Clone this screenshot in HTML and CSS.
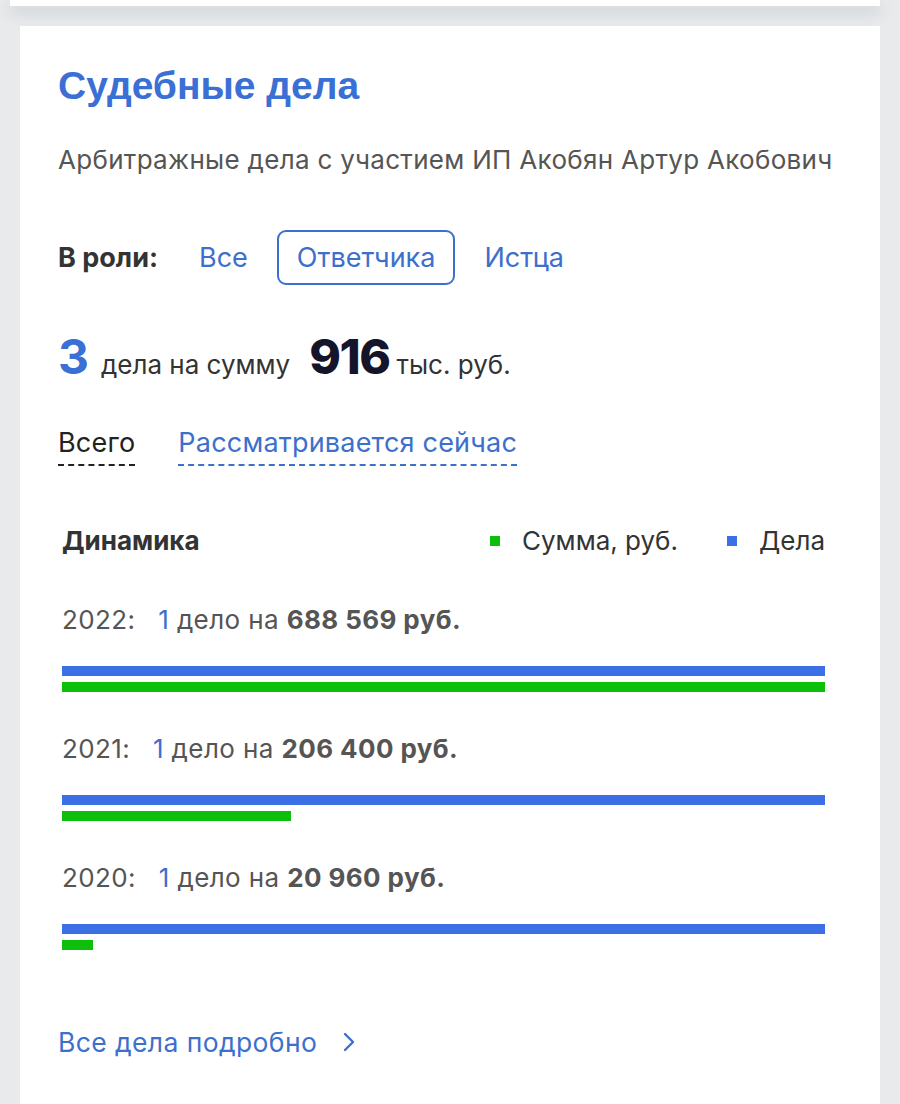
FILE: index.html
```html
<!DOCTYPE html>
<html lang="ru">

<head>
  <meta charset="UTF-8">
  <meta name="viewport" content="width=device-width, initial-scale=1.0">
  <title>Судебные дела</title>
  <link rel="stylesheet" href="styles.css">
</head>

<body>
  <div class="prev-card"></div>

  <section class="card">
    <h2 class="card-title">Судебные дела</h2>
    <p class="subtitle">Арбитражные дела с участием ИП Акобян Артур Акобович</p>

    <div class="roles">
      <span class="roles-label">В роли:</span>
      <a href="#" class="role first">Все</a>
      <a href="#" class="role active">Ответчика</a>
      <a href="#" class="role">Истца</a>
    </div>

    <div class="total">
      <span class="total-count">3</span>
      <span class="total-text">дела на сумму</span>
      <span class="total-sum">916</span>
      <span class="total-text">тыс. руб.</span>
    </div>

    <div class="tabs">
      <a href="#" class="tab current">Всего</a>
      <a href="#" class="tab">Рассматривается сейчас</a>
    </div>

    <div class="dynamics">
      <div class="dynamics-head">
        <span class="dynamics-title">Динамика</span>
        <span class="legend"><i class="dot green"></i>Сумма, руб.</span>
        <span class="legend"><i class="dot blue"></i>Дела</span>
      </div>

      <div class="year">
        <div class="year-text"><span class="year-label">2022:</span> <span class="num">1</span> дело на <b>688 569 руб.</b></div>
        <div class="bar blue" style="width:100%"></div>
        <div class="bar green" style="width:100%"></div>
      </div>

      <div class="year">
        <div class="year-text"><span class="year-label">2021:</span> <span class="num">1</span> дело на <b>206 400 руб.</b></div>
        <div class="bar blue" style="width:100%"></div>
        <div class="bar green" style="width:30%"></div>
      </div>

      <div class="year">
        <div class="year-text"><span class="year-label">2020:</span> <span class="num">1</span> дело на <b>20 960 руб.</b></div>
        <div class="bar blue" style="width:100%"></div>
        <div class="bar green" style="width:4%"></div>
      </div>
    </div>

    <a href="#" class="more">Все дела подробно
      <svg width="12" height="20" viewBox="0 0 12 20"><path d="M2 2l8 8-8 8" fill="none" stroke="#3d6fcc" stroke-width="2.4" stroke-linecap="round" stroke-linejoin="round"/></svg>
    </a>
  </section>
</body>

</html>
```

FILE: styles.css
```css
body {
  margin: 0;
  background-color: #e8eaec;
  font-family: 'Inter', 'Roboto', sans-serif;
  color: #555;
}

a {
  text-decoration: none;
}

.prev-card {
  height: 6px;
  margin: 0 20px 0 10px;
  background-color: #fff;
  box-shadow: 0 6px 14px rgba(150, 155, 165, 0.45);
}

.card {
  background-color: #fff;
  margin: 20px 20px 0 20px;
  padding: 38px 38px 60px 38px;
}

.card-title {
  margin: 0;
  font-family: 'Liberation Sans', sans-serif;
  font-size: 39px;
  font-weight: bold;
  color: #3a6fd6;
  line-height: 44px;
}

.subtitle {
  margin: 36px 0 0 0;
  font-size: 26px;
  line-height: 32px;
  letter-spacing: 0.3px;
  color: #555;
}

.roles {
  display: flex;
  align-items: center;
  margin-top: 54px;
  font-size: 27px;
  line-height: 31px;
}

.roles-label {
  font-weight: bold;
  color: #333;
  margin-right: 21px;
}

.role {
  color: #3d6fcc;
  padding: 10px 18px;
  border: 2px solid transparent;
  border-radius: 9px;
  margin-right: 9px;
}

.role.active {
  border-color: #3d6fcc;
}

.total {
  display: flex;
  align-items: baseline;
  margin-top: 44px;
  line-height: 56px;
}

.total-count {
  font-size: 48px;
  font-weight: 700;
  color: #3a6fd6;
  margin-right: 12px;
}

.total-text {
  font-size: 26px;
  color: #333;
}

.total-sum {
  font-size: 48px;
  font-weight: 800;
  color: #14142b;
  margin: 0 7px 0 19px;
  letter-spacing: -1.5px;
}

.tabs {
  display: flex;
  gap: 43px;
  margin-top: 34px;
  font-size: 27px;
  line-height: 32px;
  letter-spacing: 0.2px;
}

.tab {
  color: #3d6fcc;
  border-bottom: 2px dashed #3d6fcc;
  padding-bottom: 5px;
}

.tab.current {
  color: #222;
  border-bottom-color: #222;
}

.dynamics {
  margin: 59px 17px 0 4px;
}

.dynamics-head {
  display: flex;
  align-items: center;
  font-size: 26px;
  line-height: 32px;
  color: #333;
}

.dynamics-title {
  font-weight: bold;
  flex: 1;
}

.legend {
  display: flex;
  align-items: center;
  margin-left: 49px;
}

.dot {
  width: 10px;
  height: 10px;
  margin-right: 22px;
}

.green {
  background-color: #0bbf0b;
}

.blue {
  background-color: #3b6fe6;
}

.year {
  margin-top: 41px;
}

.dynamics-head + .year {
  margin-top: 47px;
}

.year-text {
  font-size: 26px;
  line-height: 32px;
  letter-spacing: 0.4px;
  color: #555;
}

.year-label {
  margin-right: 15px;
}

.num {
  color: #3d6fcc;
}

.year-text b {
  color: #555;
}

.bar {
  height: 10px;
  margin-top: 6px;
}

.bar.blue {
  margin-top: 30px;
}

.more {
  display: inline-flex;
  align-items: center;
  gap: 26px;
  margin-top: 76px;
  font-size: 26.5px;
  line-height: 32px;
  letter-spacing: 0.4px;
  color: #3d6fcc;
}
```
